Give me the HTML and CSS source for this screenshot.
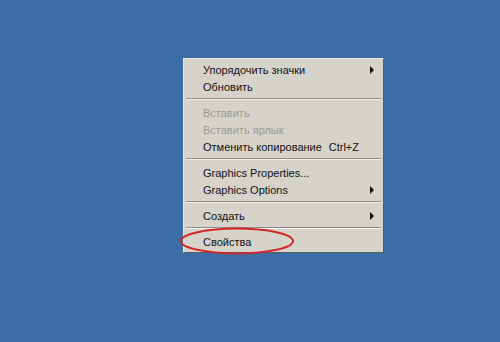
FILE: index.html
```html
<!DOCTYPE html>
<html lang="ru">
<head>
    <meta charset="UTF-8">
    <title>Рабочий стол</title>
    <link rel="stylesheet" href="styles.css">
</head>
<body>
    <div class="desktop">
        <!-- Context menu of the desktop -->
        <div class="menu">
            <div class="item">Упорядочить значки<span class="arrow"></span></div>
            <div class="item">Обновить</div>
            <div class="sep"></div>
            <div class="item disabled">Вставить</div>
            <div class="item disabled">Вставить ярлык</div>
            <div class="item">Отменить копирование<span class="key">Ctrl+Z</span></div>
            <div class="sep"></div>
            <div class="item">Graphics Properties...</div>
            <div class="item">Graphics Options<span class="arrow"></span></div>
            <div class="sep"></div>
            <div class="item">Создать<span class="arrow"></span></div>
            <div class="sep"></div>
            <div class="item">Свойства</div>

            <!-- red mark round the last item -->
            <svg class="mark" width="120" height="30" viewBox="0 0 120 30">
                <ellipse cx="58" cy="14" rx="56" ry="12.5" fill="none" stroke="#d3262b" stroke-width="2"/>
            </svg>
        </div>
    </div>
</body>
</html>
```

FILE: styles.css
```css
body {
    margin: 0;
    background-color: #3c6ea5;
}

.desktop {
    width: 500px;
    height: 342px;
    padding: 58px 0 0 183px;
    box-sizing: border-box;
}

.menu {
    position: relative;
    width: 201px;
    box-sizing: border-box;
    padding: 2px 1px;
    background-color: #d6d3cb;
    border: 1px solid;
    border-color: #e8e6e0 #5a5a5a #5a5a5a #e8e6e0;
    font-family: "Liberation Sans", Arial, sans-serif;
    font-size: 11px;
    color: #111;
}

.item {
    display: flex;
    align-items: center;
    height: 17px;
    padding-left: 18px;
    padding-right: 8px;
    white-space: nowrap;
}

.disabled {
    color: #9d9a94;
}

.key {
    margin-left: auto;
    padding-right: 15px;
}

.arrow {
    margin-left: auto;
    width: 0;
    height: 0;
    border-top: 4px solid transparent;
    border-bottom: 4px solid transparent;
    border-left: 4px solid #111;
}

.sep {
    height: 0;
    margin: 3px 1px 4px;
    border-top: 1px solid #8e8c87;
    border-bottom: 1px solid #f4f3ef;
}

.mark {
    position: absolute;
    left: -5px;
    bottom: -5px;
}
```
